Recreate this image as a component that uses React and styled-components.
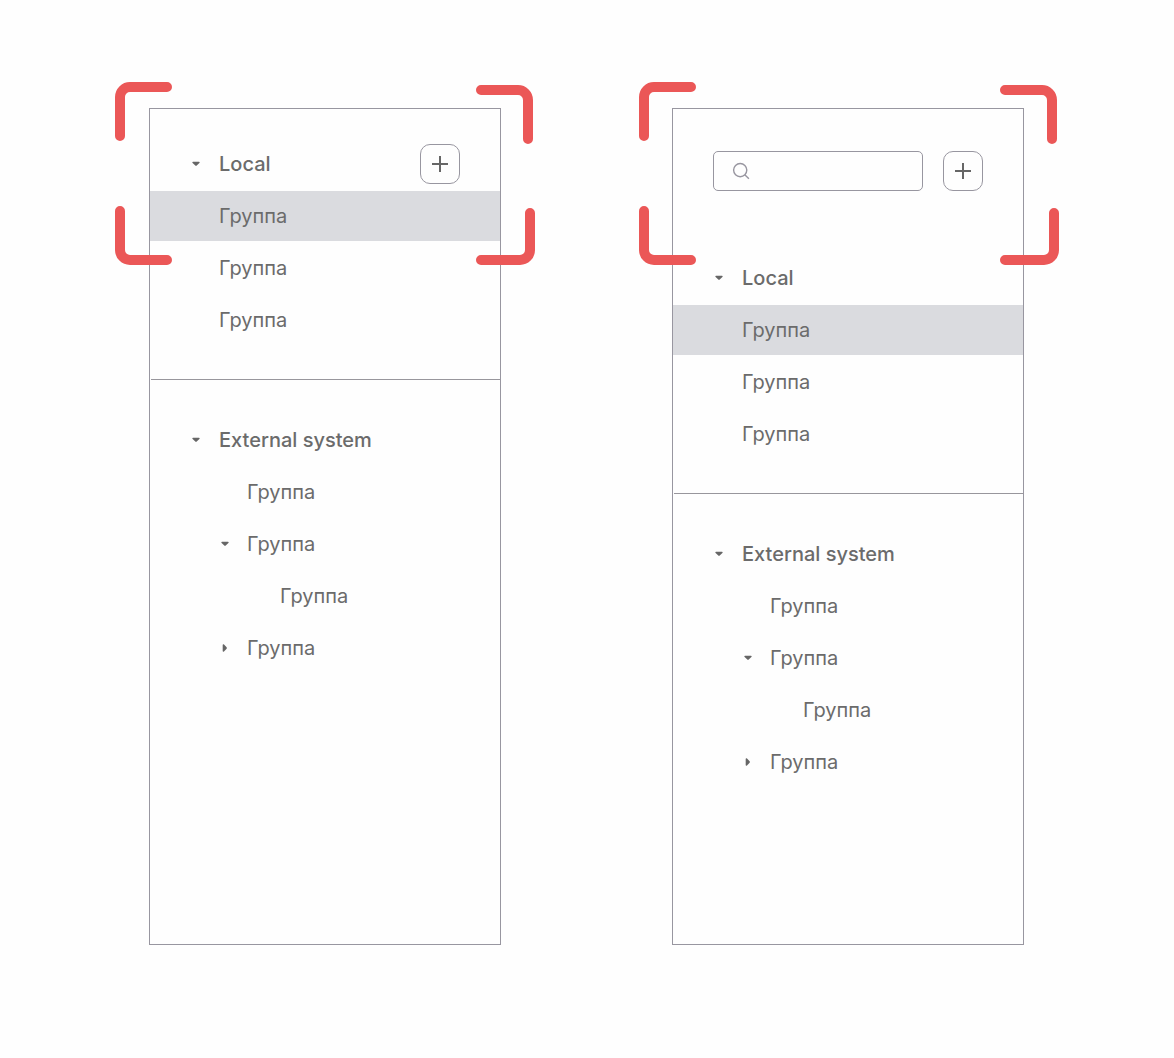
import React from "react";
import styled, { createGlobalStyle } from "styled-components";

const GlobalStyle = createGlobalStyle`
  *, *::before, *::after { box-sizing: border-box; }
  body { margin: 0; background: #fefefe; }
`;

const Page = styled.main`
  display: flex;
  align-items: flex-start;
  gap: 171px;
  height: 1058px;
  padding: 108px 0 0 149px;
  font-family: Inter, "Liberation Sans", sans-serif;
  color: #6b6b6b;
`;

const Panel = styled.section`
  position: relative;
  flex: none;
  width: 352px;
  height: 837px;
  border: 1px solid #9896a0;
  background: #fefefe;
  padding-top: ${(p) => (p.$withSearch ? 42 : 30)}px;
`;

const Toolbar = styled.div`
  display: flex;
  justify-content: space-between;
  height: 40px;
  margin: 0 40px 62px;
`;

const SearchField = styled.div`
  display: flex;
  align-items: center;
  width: 210px;
  padding-left: 18px;
  border: 1px solid #9896a0;
  border-radius: 5px;
`;

const AddButton = styled.button`
  display: grid;
  place-items: center;
  width: 40px;
  height: 40px;
  padding: 0;
  border: 1px solid #9896a0;
  border-radius: 10px;
  background: #fefefe;
  color: #666666;
`;

const Tree = styled.div`
  display: flex;
  flex-direction: column;
  gap: 2px;
`;

const Row = styled.div`
  display: flex;
  align-items: center;
  height: 50px;
  padding-left: ${(p) => p.$indent}px;
  padding-right: 40px;
  background: ${(p) => (p.$selected ? "#dadbdf" : "transparent")};
`;

const CaretSlot = styled.span`
  display: grid;
  place-items: center;
  width: 12px;
  height: 12px;
  margin-right: ${(p) => p.$gap}px;
`;

const Label = styled.span`
  flex: 1;
  font-size: 20px;
  line-height: 24px;
  font-weight: ${(p) => (p.$strong ? 500 : 400)};
  white-space: nowrap;
`;

const Divider = styled.hr`
  height: 1px;
  margin: 34px 0 35px 1px;
  border: 0;
  background: #98969c;
`;

const Brackets = styled.svg`
  position: absolute;
  left: ${(p) => p.$left}px;
  top: -27px;
  pointer-events: none;
`;

function Caret({ open }) {
  return (
    <svg width="12" height="12" viewBox="0 0 12 12" fill="#666666">
      {open ? (
        <path d="M3 3.7H9C9.7 3.7 9.9 4.5 9.4 5L6.7 7.6Q6 8.2 5.3 7.6L2.6 5C2.1 4.5 2.3 3.7 3 3.7Z" />
      ) : (
        <path d="M3.7 3V9C3.7 9.7 4.5 9.9 5 9.4L7.6 6.7Q8.2 6 7.6 5.3L5 2.6C4.5 2.1 3.7 2.3 3.7 3Z" />
      )}
    </svg>
  );
}

function Add() {
  return (
    <AddButton aria-label="+">
      <svg width="16" height="16" viewBox="0 0 16 16" stroke="#666666" strokeWidth="2">
        <path d="M8 0V16M0 8H16" />
      </svg>
    </AddButton>
  );
}

function Node({ label, level = 0, caret, strong, selected, children }) {
  const textStart = [69, 97, 130][level];
  const gap = level === 0 ? 17 : 16;
  const indent = caret ? textStart - 12 - gap : textStart;
  return (
    <Row $indent={indent} $selected={selected}>
      {caret && (
        <CaretSlot $gap={gap}>
          <Caret open={caret === "open"} />
        </CaretSlot>
      )}
      <Label $strong={strong}>{label}</Label>
      {children}
    </Row>
  );
}

function GroupTree({ action }) {
  return (
    <>
      <Tree>
        <Node label="Local" caret="open" strong>
          {action}
        </Node>
        <Node label="Группа" selected />
        <Node label="Группа" />
        <Node label="Группа" />
      </Tree>
      <Divider />
      <Tree>
        <Node label="External system" caret="open" strong />
        <Node label="Группа" level={1} />
        <Node label="Группа" level={1} caret="open" />
        <Node label="Группа" level={2} />
        <Node label="Группа" level={1} caret="closed" />
      </Tree>
    </>
  );
}

function FocusFrame({ left }) {
  return (
    <Brackets
      $left={left}
      width="420"
      height="183"
      viewBox="0 0 420 183"
      fill="none"
      stroke="#eb5757"
      strokeWidth="10"
      strokeLinecap="round"
    >
      <path d="M5 54V15A10 10 0 0 1 15 5H52" />
      <path d="M366 8H403A10 10 0 0 1 413 18V57" />
      <path d="M5 129V168A10 10 0 0 0 15 178H52" />
      <path d="M415 131V168A10 10 0 0 1 405 178H366" />
    </Brackets>
  );
}

export default function App() {
  return (
    <>
      <GlobalStyle />
      <Page>
        <Panel>
          <GroupTree action={<Add />} />
          <FocusFrame left={-35} />
        </Panel>
        <Panel $withSearch>
          <Toolbar>
            <SearchField>
              <svg width="18" height="18" viewBox="0 0 18 18" fill="none" stroke="#9896a0" strokeWidth="1.4">
                <circle cx="8.2" cy="8.1" r="6.6" />
                <path d="M12.8 12.7L16.9 16.8" />
              </svg>
            </SearchField>
            <Add />
          </Toolbar>
          <GroupTree />
          <FocusFrame left={-34} />
        </Panel>
      </Page>
    </>
  );
}
